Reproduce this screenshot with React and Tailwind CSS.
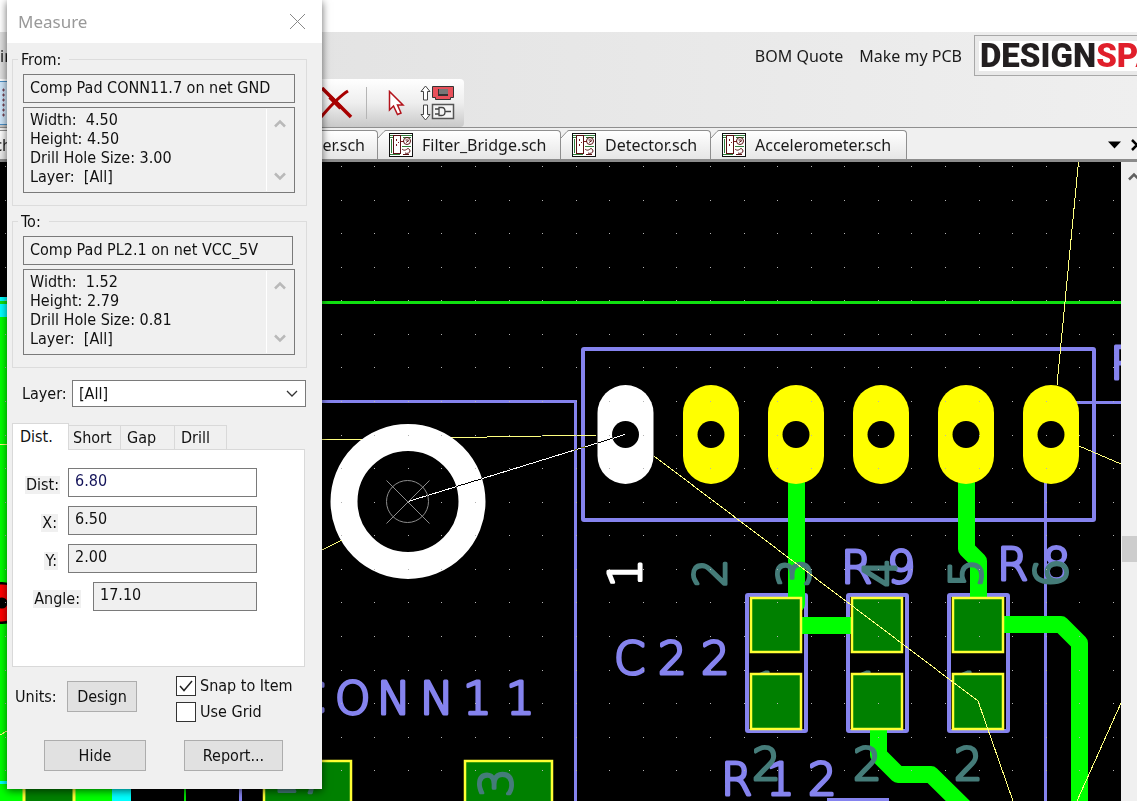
import React from "react";

const UI = 'font-["Noto_Sans","Open_Sans",sans-serif]';

const PURPLE = "#8583ee";
const TEAL = "#457c79";
const TRACK = "#00ff00";
const COPPER = "#008000";
const RIM = "#ffff33";
const NET = "#ffff80";
const SILK = 'font-["DejaVu_Sans",sans-serif] text-[45px] font-extralight [stroke-width:3px] [stroke-linejoin:round]';

const range = (n) => Array.from({ length: n }, (_, i) => i);

/* ---------- icons ---------- */

function SheetIcon() {
  return (
    <svg width="24" height="24" viewBox="0 0 24 24" shapeRendering="crispEdges" aria-hidden="true">
      <rect x="0.5" y="0.5" width="23" height="23" fill="#fff" stroke="#111" />
      <path d="M1 2.5h4M12 2.5h11M1 4.5h3M14 4.5h8M2.5 6v14M1 21.5h10M13 13.5h9" stroke="#2f7d3a" fill="none" />
      <rect x="4.5" y="2.5" width="7" height="18" fill="#fff" stroke="#5a1013" />
      <path d="M7.5 6v2M7.5 11v2M9.5 9v1M12 8.5h3" stroke="#7a1a1e" />
      <g shapeRendering="auto" fill="none" stroke="#5a1013">
        <circle cx="18" cy="8" r="3.5" />
        <path d="M16.5 7l3 0M17 9.5l3-2M13 16c2 2 4 1 5 0s3 0 3 2-3 3-5 2M14 21.5h6" />
      </g>
    </svg>
  );
}

function DeleteIcon() {
  return (
    <svg width="34" height="32" viewBox="0 0 34 32" aria-hidden="true">
      <path d="M2 1L31 30" stroke="#a80000" strokeWidth="3.5" />
      <path d="M1 30C8 22 18 10 28 4" fill="none" stroke="#a80000" strokeWidth="3" />
      <path d="M10 10l11 11" stroke="#a80000" strokeWidth="4.5" />
    </svg>
  );
}

function PointerIcon() {
  return (
    <svg width="17" height="26" viewBox="0 0 17 26" aria-hidden="true">
      <path d="M1.5 1.5V20l4-4 4 8.5 3.5-1.5-3.5-8h5.5z" fill="#fff" stroke="#b3131b" strokeWidth="1.5" />
    </svg>
  );
}

function SwapIcon() {
  return (
    <svg width="35" height="36" viewBox="0 0 35 36" aria-hidden="true">
      <path d="M5.5 1L10 6.5H7.5V15h-4V6.5H1z" fill="#fff" stroke="#444" />
      <path d="M5.5 35L1 29.5h2.5V20h4v9.5H10z" fill="#fff" stroke="#444" />
      <path d="M12.5 1.5h21v11h-3v2h-15v-2h-3z" fill="#e8505a" stroke="#333" />
      <path d="M18 4h10v7H18z" fill="#333" />
      <path d="M19 4h9v5h-9z" fill="#777" />
      <rect x="12.5" y="19.5" width="21" height="14" fill="#f4f4f4" stroke="#555" strokeWidth="1.5" />
      <path d="M15 24h4M15 29h4M19 22.5v8h3c2 0 3-2 3-4s-1-4-3-4zM25 26.5h6" fill="none" stroke="#444" strokeWidth="1.3" />
    </svg>
  );
}

function Chevron({ up = false, className = "" }) {
  return (
    <svg width="12" height="9" viewBox="0 0 12 9" className={className} aria-hidden="true">
      <path d={up ? "M1 7.5L6 2.5l5 5" : "M1 1.5L6 6.5l5-5"} fill="none" stroke="currentColor" strokeWidth="2.5" />
    </svg>
  );
}

/* ---------- board canvas ---------- */

function Legend({ chars, x, y, color = PURPLE }) {
  return (
    <text x={x} y={y} fill={color} stroke={color} className={SILK}>
      {chars}
    </text>
  );
}

function PinNumber({ n, x, y = 573, color = TEAL }) {
  return (
    <text transform={`translate(${x} ${y}) rotate(-90)`} textAnchor="middle" fill={color} stroke={color} className={SILK}>
      {n}
    </text>
  );
}

function SmdPart({ x }) {
  return <rect x={x + 2} y="595" width="59" height="136" rx="1" fill="none" stroke={PURPLE} strokeWidth="4" />;
}

function SmdPads({ x }) {
  return (
    <g fill={COPPER} stroke={RIM} strokeWidth="2.5">
      <rect x={x + 6} y="598" width="50" height="54" />
      <rect x={x + 6} y="674" width="50" height="55" />
    </g>
  );
}

const PARTS = [745, 846, 947];

function Board() {
  return (
    <svg className="block h-full w-full" role="img" aria-label="PCB layout">
      <g transform="translate(0 -162)">
        <rect y="297" width="24" height="20" fill="#00ffff" />
        <rect y="317" width="112" height="484" fill={TRACK} />
        <rect y="781" width="24" height="3" fill="#00ffff" />
        <circle cx="2" cy="603" r="21" fill="#000" />
        <circle cx="2" cy="603" r="12" fill="none" stroke="#ff0000" strokeWidth="13" />
        <rect x="24" y="770" width="50" height="40" fill={COPPER} stroke={RIM} strokeWidth="3" />
        <rect x="112" y="770" width="19" height="31" fill="#00ffff" />
        <path d="M185 770V801" stroke="#00e000" strokeWidth="2" />
        <path d="M240.5 770V801" stroke={PURPLE} strokeWidth="3" />
        <path d="M0 302.5H2400" stroke="#10e010" strokeWidth="3" />

        <g fill="none" stroke={PURPLE} strokeWidth="3">
          <path d="M300 401.5H575.5V2000" />
          <path d="M1060 402.5H2400M1045.5 470V2000" />
          <rect x="583" y="349" width="511" height="171" strokeWidth="4" rx="1" />
          <path d="M827 800H889" strokeWidth="4" />
        </g>
        {PARTS.map((x) => <SmdPart key={x} x={x} />)}

        <g fill="none" stroke={TRACK} strokeWidth="17" strokeLinejoin="round">
          <path d="M796.5 470V604" strokeLinecap="round" />
          <path d="M796 625.5H860" />
          <path d="M966.5 470V549L978.5 561V610" />
          <path d="M1000 624.5H1061L1079.5 643V2000" />
          <path d="M878.5 720V755L898 774.5H931L965 808" />
        </g>

        <Legend chars="CONN11" x="294 335 377 420 463 506" y="714" />
        <Legend chars="C22" x="614 658 701" y="674" />
        <Legend chars="R12" x="721 766 808" y="795" />
        <Legend chars="R9" x="841 887" y="583" />
        <Legend chars="R8" x="997 1042" y="580" />
        <Legend chars="R" x="1110" y="379" />

        <PinNumber n="1" x={641} color="#fff" />
        <PinNumber n="2" x={726} />
        <PinNumber n="3" x={810} />
        <PinNumber n="4" x={896} />
        <PinNumber n="5" x={982} />
        <PinNumber n="6" x={1067} />
        {PARTS.map((x) => (
          <g key={x}>
            <Legend chars="1" x={x + 7} y="705" color={TEAL} />
            <Legend chars="2" x={x + 7} y="780" color={TEAL} />
          </g>
        ))}
        {PARTS.map((x) => <SmdPads key={x} x={x} />)}

        <g fill={COPPER} stroke={RIM} strokeWidth="2.5">
          <rect x="264" y="761" width="87" height="60" />
          <rect x="465" y="761" width="87" height="60" />
        </g>
        <PinNumber n="3" x={512} y={783} />
        <PinNumber n="5" x={312} y={783} />

        <path d="M322 440L597 435" stroke={NET} shapeRendering="crispEdges" />

        {[625.5, 711, 796, 881, 966, 1051].map((cx, i) => (
          <g key={cx}>
            <rect x={cx - 28} y="385" width="56" height="99" rx="28" fill={i === 0 ? "#fff" : "#ffff00"} />
            <circle cx={cx} cy="434.5" r="13.5" fill="#000" />
          </g>
        ))}

        <circle cx="408" cy="501.5" r="64" fill="#000" stroke="#fff" strokeWidth="27" />
        <g fill="none" stroke="#8c8c8c">
          <circle cx="407.5" cy="501.5" r="21" />
          <path d="M386.5 480.5l43 43M429.5 480.5l-43 43" />
        </g>

        <g fill="#b4b4b4" shapeRendering="crispEdges">
          {range(20).map((r) =>
            range(60).map((c) => (
              <rect key={`${r}-${c}`} x={Math.round(5 + c * 33.57)} y={Math.round(166 + r * 33.57)} width="1" height="1" />
            ))
          )}
        </g>

        <g fill="none" stroke={NET} shapeRendering="crispEdges">
          <path d="M0 444.5H7" />
          <path d="M0 735L7 731M322 550L342 540" />
          <path d="M654 456L978 701L1013 801" />
          <path d="M1078.5 162L1057 385" />
          <path d="M1079 446L1142 473" />
          <path d="M1121 703L1077 801" />
        </g>
        <path d="M408 501.5L625 434.5" stroke="#fff" shapeRendering="crispEdges" className="mix-blend-difference" />
      </g>
    </svg>
  );
}

/* ---------- main window ---------- */

function DocTab({ name, className }) {
  return (
    <button type="button" className={`relative flex h-[29px] items-center gap-[9px] rounded-tr-sm border-t border-r border-[#8f8f8f] bg-linear-to-b from-white to-[#e6e6e6] pl-[11px] ${className}`}>
      <svg className="absolute -top-px left-0" width="8" height="9" viewBox="0 0 8 9" aria-hidden="true">
        <path d="M0 0H8L0 8z" fill="#f0f0f0" />
        <path d="M0 8L6 1.5Q7 0.5 8 0.5" fill="none" stroke="#8f8f8f" />
      </svg>
      <SheetIcon />
      <span>{name}</span>
    </button>
  );
}

function MainWindow() {
  return (
    <div className="flex min-h-screen flex-col overflow-hidden text-[16px] text-[#1b1b1b]">
      <div className="h-8 shrink-0 bg-white" />
      <header className="shrink-0 bg-linear-to-r from-[#dfdfdf] to-[#efefef]">
        <nav className="flex h-[47px] items-center">
          <span>in</span>
          <div className="ml-auto flex gap-4 pr-3">
            <a href="#bom">BOM Quote</a>
            <a href="#pcb">Make my PCB</a>
          </div>
          <a href="#designspark" className="flex h-[41px] w-[163px] items-center overflow-hidden border border-r-0 border-[#a8a8a8] bg-[#e9e9e9] pl-1">
            <span className='flex h-[30px] w-full items-center overflow-hidden bg-white pl-px font-["Roboto",sans-serif] text-[33px] leading-[30px] font-black whitespace-nowrap text-[#231f20]'>
              DESIGN<span className="text-[#e01f2b]">SPA</span>
            </span>
          </a>
        </nav>
        <div className="flex h-12 w-[464px] items-center rounded-r-sm bg-linear-to-b from-white via-[#eeeeee] to-[#c9c9c9]">
          <button type="button" aria-label="Grid" className="h-[44px] w-2 border-y border-[#4a90c8] bg-[#cfe6fa]">
            <svg width="8" height="30" viewBox="0 0 8 30" aria-hidden="true">
              {range(6).map((i) => (
                <path key={i} d={`M2 ${2 + i * 5}h3M3.5 ${i * 5 + 0.5}v3`} stroke="#774455" />
              ))}
            </svg>
          </button>
          <button type="button" aria-label="Delete" className="ml-auto"><DeleteIcon /></button>
          <span className="ml-3 h-8 w-px bg-[#b5b5b5]" />
          <button type="button" aria-label="Select" className="ml-[21px]"><PointerIcon /></button>
          <button type="button" aria-label="Swap side" className="mr-[9px] ml-[15px]"><SwapIcon /></button>
        </div>
      </header>
      <div className="flex h-[35px] shrink-0 items-end border-t border-b-[3px] border-t-[#8f8f8f] border-b-[#8c8c8c] bg-[#f0f0f0]">
        <button type="button" className="flex h-[29px] w-[378px] items-center justify-between rounded-tr-sm border-t border-r border-[#8f8f8f] bg-linear-to-b from-white to-[#e6e6e6] pr-3">
          <span className="flex w-3 justify-end overflow-hidden">ch</span>
          <span>er.sch</span>
        </button>
        <DocTab name="Filter_Bridge.sch" className="w-[183px]" />
        <DocTab name="Detector.sch" className="w-[150px]" />
        <DocTab name="Accelerometer.sch" className="w-[196px]" />
        <div className="ml-auto flex h-[29px] items-center gap-[10px] overflow-hidden">
          <button type="button" aria-label="List documents">
            <svg width="13" height="8" viewBox="0 0 13 8" aria-hidden="true"><path d="M0 0.5H13L6.5 7.5z" fill="#000" /></svg>
          </button>
          <button type="button" aria-label="Close document" className="w-[6px] overflow-hidden">
            <svg width="12" height="12" viewBox="0 0 12 12" aria-hidden="true" className="max-w-none"><path d="M1 1l10 10M11 1L1 11" stroke="#000" strokeWidth="2.5" /></svg>
          </button>
        </div>
      </div>
      <main className="flex flex-1">
        <div className="relative min-w-0 flex-1 overflow-hidden bg-black">
          <div className="absolute inset-0"><Board /></div>
        </div>
        <div className="flex w-4 shrink-0 flex-col overflow-hidden bg-[#f0f0f0]">
          <Chevron up className="mt-[10px] ml-[7px] max-w-none text-[#606060]" />
          <div className="mt-[355px] ml-px h-[26px] bg-[#cdcdcd]" />
        </div>
      </main>
    </div>
  );
}

/* ---------- measure dialog ---------- */

function ItemGroup({ id, title, item, details, itemClass }) {
  return (
    <fieldset className="mr-[15px] ml-[5px] min-w-0 border border-[#dcdcdc] px-[10px] pb-3">
      <legend className="-ml-[5px] pr-2 pl-[3px] leading-[19px]">{title}</legend>
      <input aria-label={`${title} item`} readOnly value={item} className={`mt-[5px] block h-[29px] border border-[#7a7a7a] bg-[#f0f0f0] px-[6px] pb-[2px] ${itemClass}`} />
      <div className="mt-1 flex h-[86px] w-[272px] border border-[#7a7a7a] p-px">
        <textarea id={id} aria-label={`${title} details`} readOnly rows={4} value={details} className="block min-w-0 flex-1 resize-none overflow-hidden border-r border-white bg-transparent pt-px pl-[5px] leading-[19px]" />
        <div className="flex w-[26px] flex-col items-center justify-between py-[10px] text-[#b9b9b9]">
          <Chevron up />
          <Chevron />
        </div>
      </div>
    </fieldset>
  );
}

function Field({ id, label, value, labelClass, inputClass, active = false }) {
  return (
    <div className="flex h-[29px] items-center">
      <div className={`flex justify-end pt-1 ${labelClass}`}>
        <label htmlFor={id} className="bg-[#f0f0f0] px-px leading-[18px]">{label}</label>
      </div>
      <input id={id} readOnly={!active} defaultValue={value} className={`ml-auto h-[29px] border border-[#7a7a7a] px-[6px] pb-1 ${inputClass} ${active ? "bg-white text-[#14145a]" : "bg-[#f0f0f0]"}`} />
    </div>
  );
}

const BTN = "h-[31px] border border-[#adadad] bg-[#e1e1e1]";
const TAB = "h-6 border border-l-0 border-b-0 border-[#d9d9d9] text-left";
const CHECK = "h-5 w-5 appearance-none border border-[#333] bg-white";

function MeasureDialog() {
  return (
    <section role="dialog" aria-label="Measure" className='absolute top-0 left-[7px] w-[315px] bg-[#f0f0f0] pb-[18px] font-["DejaVu_Sans_Condensed","Noto_Sans",sans-serif] text-[16px] text-[#111] shadow-[0_2px_8px_rgba(0,0,0,0.6)]'>
      <div className="flex h-[43px] items-center justify-between bg-white pr-4 pl-[11px]">
        <h1 className='font-["Noto_Sans",sans-serif] text-[17px] text-[#999]'>Measure</h1>
        <button type="button" aria-label="Close">
          <svg width="17" height="17" viewBox="0 0 17 17" aria-hidden="true"><path d="M1 1l15 15M16 1L1 16" stroke="#888" /></svg>
        </button>
      </div>

      <div className="pt-[7px]">
        <ItemGroup id="from" title="From:" item="Comp Pad CONN11.7 on net GND" itemClass="w-[272px]" details={"Width:  4.50\nHeight: 4.50\nDrill Hole Size: 3.00\nLayer:  [All]"} />
      </div>
      <div className="pt-[6px]">
        <ItemGroup id="to" title="To:" item="Comp Pad PL2.1 on net VCC_5V" itemClass="w-[270px]" details={"Width:  1.52\nHeight: 2.79\nDrill Hole Size: 0.81\nLayer:  [All]"} />
      </div>

      <div className="mt-3 flex items-center justify-between pr-4 pl-[15px]">
        <label htmlFor="layer">Layer:</label>
        <div className="relative">
          <select id="layer" className="block h-[27px] w-[234px] appearance-none border border-[#7a7a7a] bg-white pl-[6px]">
            <option>[All]</option>
          </select>
          <svg className="pointer-events-none absolute top-[10px] right-2" width="12" height="8" viewBox="0 0 12 8" aria-hidden="true"><path d="M1 1l5 5 5-5" fill="none" stroke="#333" strokeWidth="1.3" /></svg>
        </div>
      </div>

      <div className="mt-4 ml-[5px] w-[293px]">
        <div role="tablist" className="flex items-end">
          <button type="button" role="tab" aria-selected="true" className="relative -mb-px h-[27px] w-[57px] border border-b-0 border-[#d9d9d9] bg-white pl-[7px] text-left">Dist.</button>
          <button type="button" role="tab" className={`${TAB} w-[52px] pl-1`}>Short</button>
          <button type="button" role="tab" className={`${TAB} w-[54px] pl-[6px]`}>Gap</button>
          <button type="button" role="tab" className={`${TAB} w-[52px] pl-[6px]`}>Drill</button>
        </div>
        <div role="tabpanel" className="flex h-[218px] flex-col gap-[9px] border border-[#d9d9d9] bg-white pt-[18px] pr-[47px]">
          <Field id="dist" label="Dist:" value="6.80" labelClass="w-[47px]" inputClass="w-[189px]" active />
          <Field id="dx" label="X:" value="6.50" labelClass="w-[45px]" inputClass="w-[189px]" />
          <Field id="dy" label="Y:" value="2.00" labelClass="w-[45px]" inputClass="w-[189px]" />
          <Field id="angle" label="Angle:" value="17.10" labelClass="w-[68px]" inputClass="w-[164px]" />
        </div>
      </div>

      <div className="mt-[9px] flex items-start pl-2">
        <div className="mt-[5px] flex items-center">
          <span className="w-[52px]">Units:</span>
          <button type="button" className={`${BTN} w-[70px]`}>Design</button>
        </div>
        <div className="ml-[39px] flex flex-col gap-[6px]">
          <label className="flex h-5 items-center gap-1">
            <span className="relative flex">
              <input type="checkbox" defaultChecked className={CHECK} />
              <svg className="pointer-events-none absolute top-1 left-[3px]" width="14" height="12" viewBox="0 0 14 12" aria-hidden="true"><path d="M1 6l4 4.5L13 1" fill="none" stroke="#222" strokeWidth="1.5" /></svg>
            </span>
            Snap to Item
          </label>
          <label className="flex h-5 items-center gap-1">
            <input type="checkbox" className={CHECK} />
            Use Grid
          </label>
        </div>
      </div>

      <div className="mt-[18px] flex gap-[38px] pl-[37px]">
        <button type="button" className={`${BTN} w-[102px]`}>Hide</button>
        <button type="button" className={`${BTN} w-[99px]`}>Report...</button>
      </div>
    </section>
  );
}

export default function App() {
  return (
    <div className={`relative ${UI}`}>
      <MainWindow />
      <MeasureDialog />
    </div>
  );
}
